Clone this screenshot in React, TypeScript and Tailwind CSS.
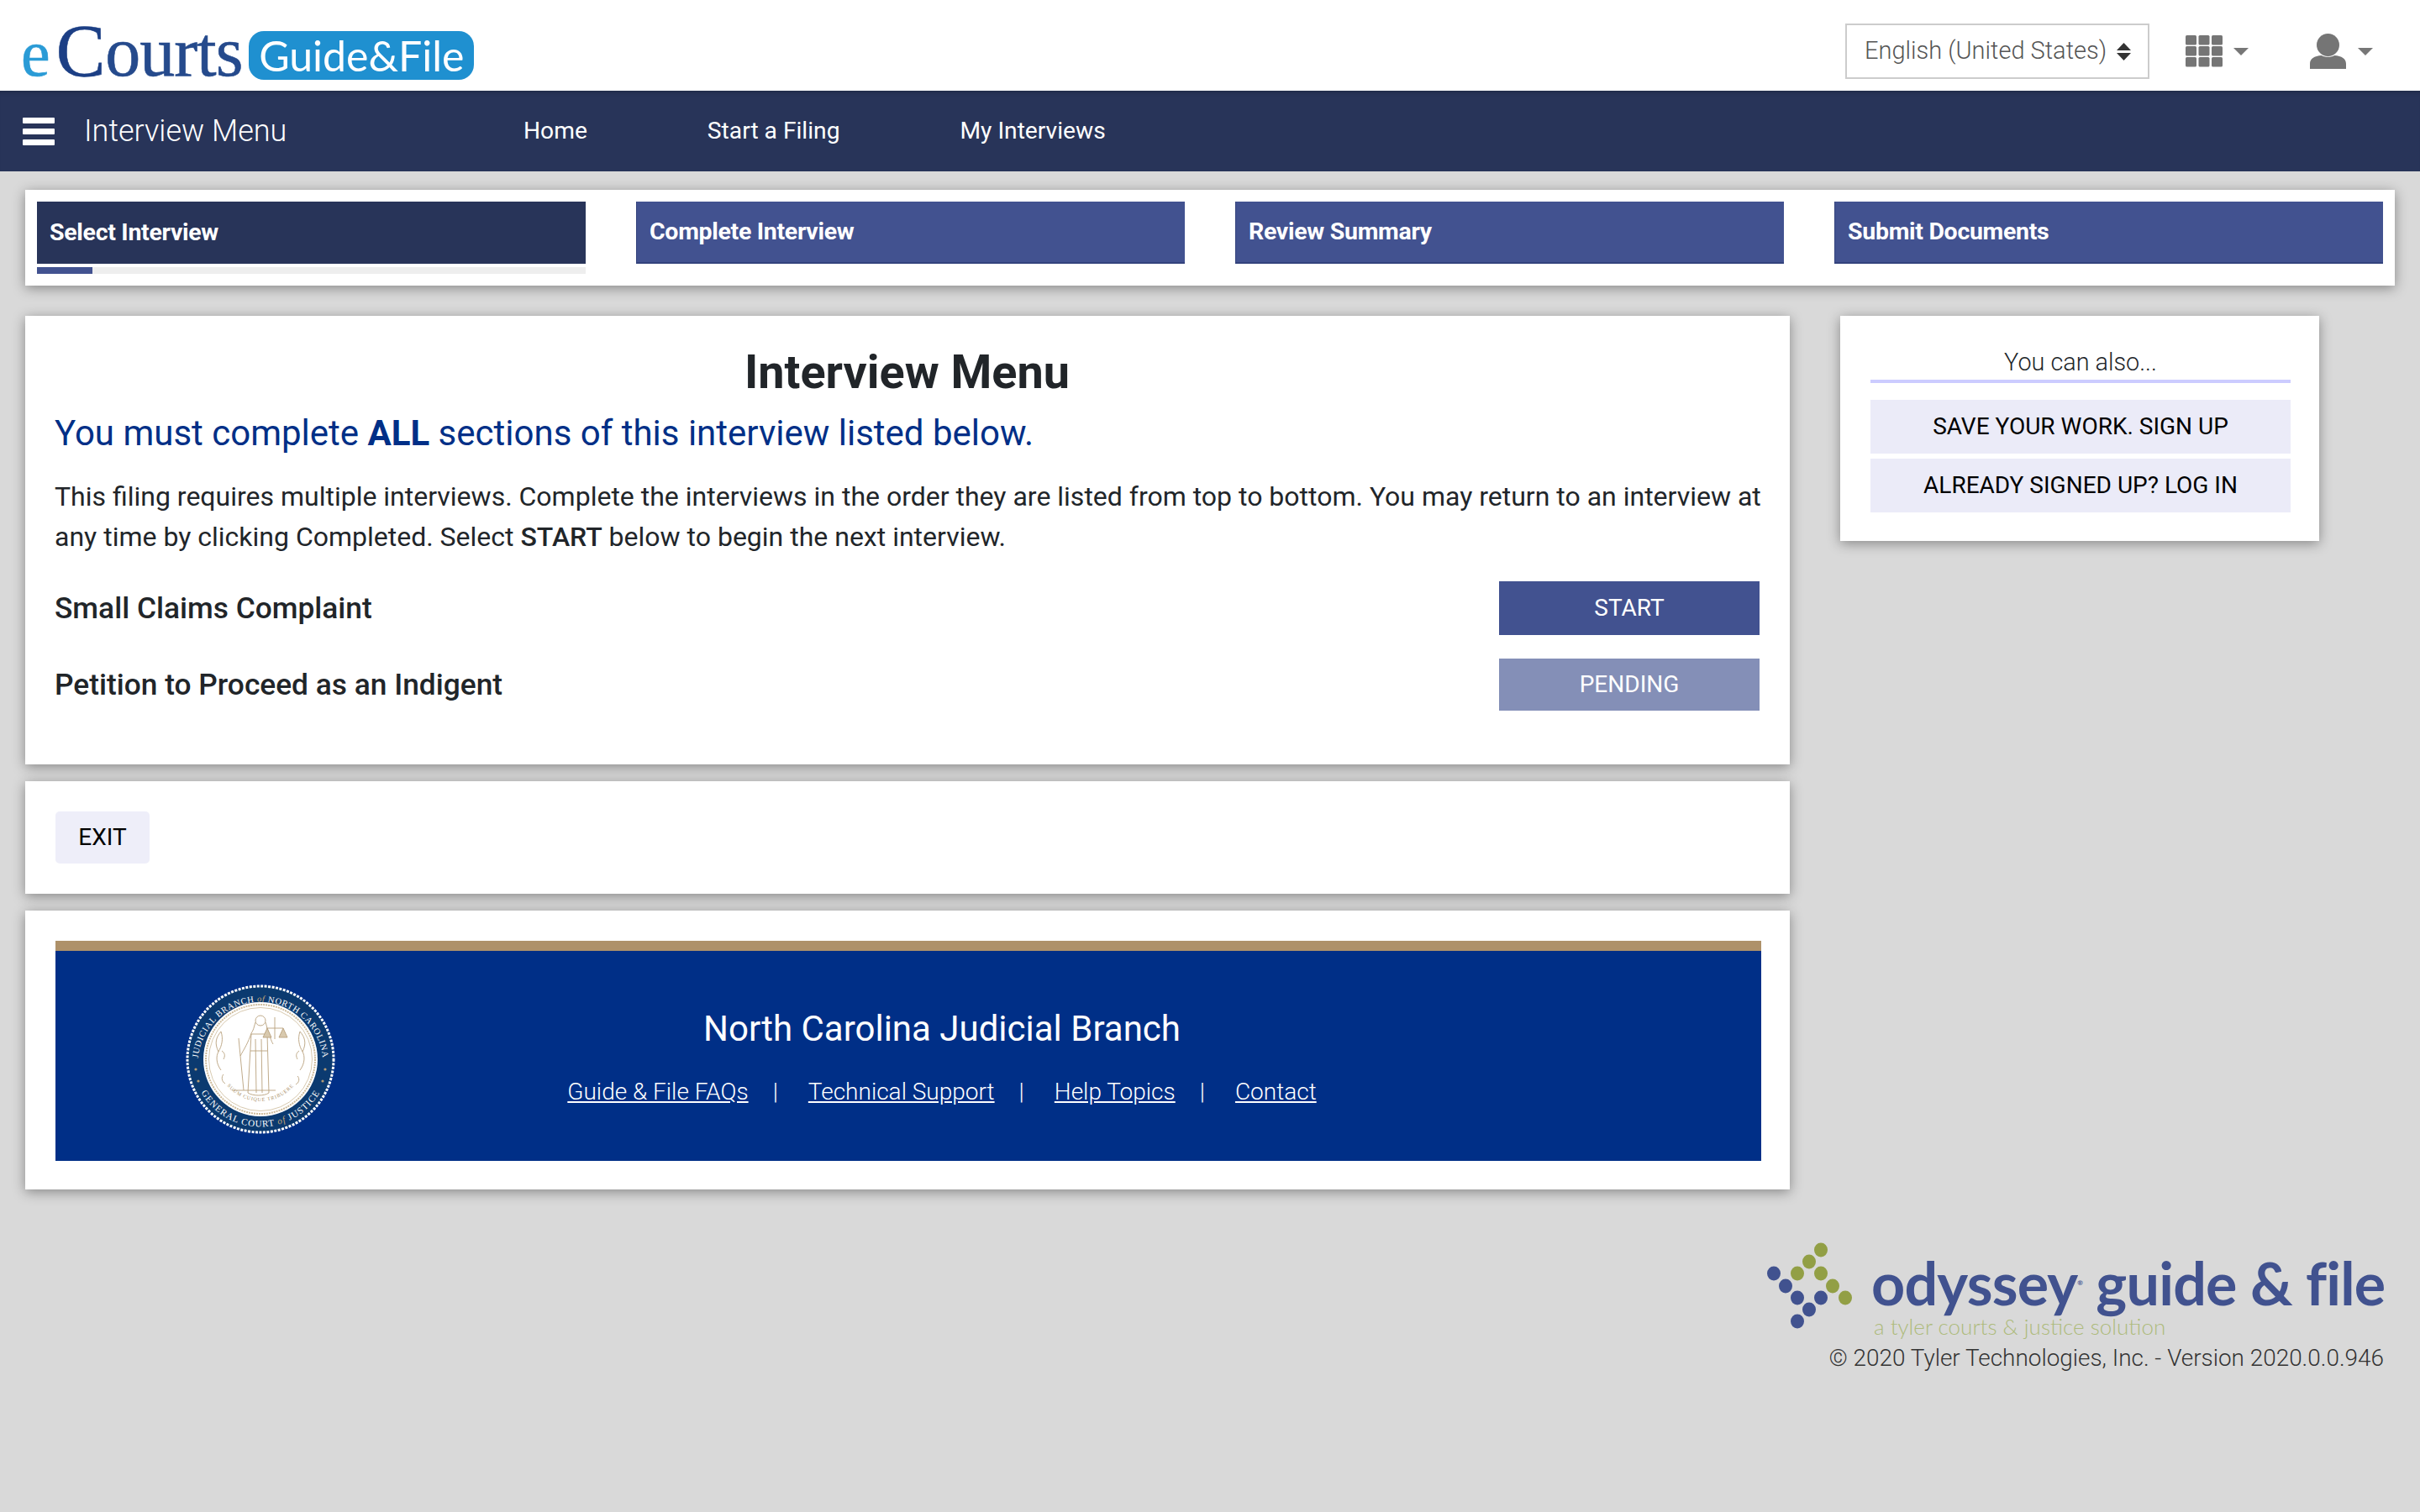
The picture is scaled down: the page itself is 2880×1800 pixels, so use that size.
const steps = ["Select Interview", "Complete Interview", "Review Summary", "Submit Documents"];
const navLinks = ["Home", "Start a Filing", "My Interviews"];

const cardShadow = "shadow-[0_3px_14px_rgba(0,0,0,0.38)]";

const Caret = () => (
  <svg width="18" height="9" viewBox="0 0 18 9">
    <path d="M0 0h18L9 9z" fill="#777" />
  </svg>
);

const GridIcon = () => (
  <svg width="44" height="38" viewBox="0 0 44 38" fill="#757575">
    {[0, 15.5, 31].map((x) =>
      [0, 13, 26].map((y) => <rect key={`${x}-${y}`} x={x} y={y} width="13" height="11.5" rx="1.5" />)
    )}
  </svg>
);

const UserIcon = () => (
  <svg width="43" height="42" viewBox="0 0 43 42" fill="#757575">
    <ellipse cx="21.5" cy="13.5" rx="13.5" ry="13.5" />
    <path d="M0 42V36C0 30 5 26.5 14 26c2 2.4 13 2.4 15 0 9 .5 14 4 14 10v6z" />
  </svg>
);

const Seal = () => (
  <svg width="180" height="180" viewBox="0 0 180 180">
    <defs>
      <path id="sealTop" d="M 15.5 96 A 74.5 74.5 0 0 1 164.5 96" />
      <path id="sealBottom" d="M 9 98 A 81.5 81.5 0 0 0 171 98" />
      <path id="sealMotto" d="M 42 108 A 52 52 0 0 0 138 108" />
    </defs>
    <circle cx="90" cy="90" r="87" fill="#0b3a70" stroke="#fff" strokeWidth="3" strokeDasharray="3 1.5" />
    <text fontFamily="'Liberation Serif', serif" fontSize="10.5" fill="#fff" letterSpacing="0.6">
      <textPath href="#sealTop" startOffset="50%" textAnchor="middle">
        JUDICIAL BRANCH <tspan fill="#c2a777" fontStyle="italic">of</tspan> NORTH CAROLINA
      </textPath>
    </text>
    <text fontFamily="'Liberation Serif', serif" fontSize="11" fill="#fff" letterSpacing="1">
      <textPath href="#sealBottom" startOffset="50%" textAnchor="middle">
        GENERAL COURT <tspan fill="#c2a777" fontStyle="italic">of</tspan> JUSTICE
      </textPath>
    </text>
    <circle cx="90" cy="90" r="68" fill="#fff" />
    <circle cx="90" cy="90" r="65" fill="none" stroke="#cdbb9b" strokeWidth="2" strokeDasharray="2 1" />
    <circle cx="90" cy="90" r="61.5" fill="none" stroke="#cdbb9b" strokeWidth="0.8" />
    <g fill="none" stroke="#b9a27e" strokeWidth="0.9">
      <circle cx="90" cy="44" r="6" />
      <path d="M84 46c-2 6-2 9-5 13M96 46c2 6 2 9 4 13" />
      <path d="M79 59c-3 10-9 20-13 27M100 59c2 6 3 10 5 13" />
      <path d="M79 60l-4 70c6 4 20 4 25 0l-2-70z" />
      <path d="M84 66l1 64M91 66l1 64M78 80h20" />
      <path d="M64 65l6 62M56 127h52" />
      <path d="M107 40v26M97 53h20" />
      <path d="M98 53l-5 11h10zM117 53l-5 11h10z" fill="#d8c9ae" />
      <path d="M43 57c-6 7-8 14-3 24 4-7 6-15 3-24zM40 81c-3 5-3 14 3 22M44 80c4 3 4 6 2 10" />
      <path d="M137 57c6 7 8 14 3 24-4-7-6-15-3-24zM140 81c3 5 3 14-3 22M136 80c-4 3-4 6-2 10" />
      <path d="M46 108c-3 3-2 9 2 11M134 110c3 3 2 8-2 10" />
    </g>
    <text fontFamily="'Liberation Serif', serif" fontSize="6" fill="#a98f68" letterSpacing="0.9">
      <textPath href="#sealMotto" startOffset="50%" textAnchor="middle">SUUM CUIQUE TRIBUERE</textPath>
    </text>
    <g fill="#b59c76">
      <circle cx="13" cy="102" r="1.6" />
      <circle cx="167" cy="102" r="1.6" />
      <circle cx="16" cy="116" r="1.6" />
      <circle cx="164" cy="116" r="1.6" />
    </g>
  </svg>
);

const DotsLogo = () => (
  <svg width="110" height="110" viewBox="0 0 110 110">
    <g fill="#929f45">
      {[[68, 12], [54, 26], [40, 40], [68, 40], [82, 55], [97, 69]].map(([x, y]) => (
        <ellipse key={`${x}-${y}`} cx={x} cy={y} rx="8" ry="8.5" />
      ))}
    </g>
    <g fill="#41528f">
      {[[12, 40], [26, 55], [40, 69], [68, 69], [54, 83], [40, 97]].map(([x, y]) => (
        <ellipse key={`${x}-${y}`} cx={x} cy={y} rx="8" ry="8.5" />
      ))}
    </g>
  </svg>
);

export default function App() {
  return (
    <div className="min-h-screen bg-[#d9d9d9] font-['Roboto',sans-serif] text-[28px] font-light text-[#212529]">
      <header className="flex h-[108px] items-center justify-between bg-white">
        <div className="ml-[25px] mt-[14px] flex items-center">
          <span className="flex items-baseline font-['Liberation_Serif',serif] leading-none [-webkit-text-stroke:0.6px]">
            <span className="text-[78px] text-[#2a9bd6]">e</span>
            <span className="ml-[7px] text-[88px] text-[#1c3f85]">C</span>
            <span className="text-[84px] tracking-[-1px] text-[#254a8c]">ourts</span>
          </span>
          <span className="ml-[8px] mt-[10px] flex h-[58px] w-[268px] items-center justify-center rounded-[18px] bg-[#1f90d0] font-['Lato',sans-serif] text-[50px] font-normal leading-none text-white">
            Guide&amp;File
          </span>
        </div>
        <div className="mr-[56px] mt-[14px] flex items-center">
          <div className="flex h-[66px] w-[362px] items-center border-2 border-[#ccc] pl-[21px] text-[#555]">
            <span className="text-[29px]">English (United States)</span>
            <svg className="ml-[12px]" width="17" height="21" viewBox="0 0 17 21" fill="#333">
              <path d="M8.5 0L17 9H0zM0 12h17l-8.5 9z" />
            </svg>
          </div>
          <div className="ml-[43px] flex items-center gap-[13px]">
            <GridIcon />
            <Caret />
          </div>
          <div className="ml-[73px] flex items-center gap-[14px]">
            <UserIcon />
            <Caret />
          </div>
        </div>
      </header>

      <nav className="flex h-[96px] items-center bg-[#283459] font-normal text-white shadow-[inset_0_6px_6px_-6px_rgba(0,0,0,0.35)]">
        <div className="ml-[27px] flex w-[38px] flex-col gap-[6px]">
          <div className="h-[7px] rounded-[1px] bg-white" />
          <div className="h-[7px] rounded-[1px] bg-white" />
          <div className="h-[7px] rounded-[1px] bg-white" />
        </div>
        <span className="ml-[35px] w-[523px] text-[36px] font-light">Interview Menu</span>
        <div className="flex gap-[143px] text-[28.2px]">
          {navLinks.map((l) => (
            <a key={l}>{l}</a>
          ))}
        </div>
      </nav>

      <div className="px-[30px] pt-[22px]">
        <div className={`grid h-[114px] w-[2820px] grid-cols-4 gap-[60px] bg-white px-[14px] pt-[14px] ${cardShadow}`}>
          {steps.map((s, i) => (
            <div key={s}>
              <div
                className={`flex h-[74px] items-center border-[#33427c] pl-[15px] text-[28.5px] font-bold tracking-[-0.3px] text-white ${
                  i === 0 ? "bg-[#283459]" : "border-b-2 border-l bg-[#425290]"
                }`}
              >
                {s}
              </div>
              {i === 0 && (
                <div className="mt-[4px] h-[8px] bg-[#eee]">
                  <div className="h-full w-[66px] bg-[#425290]" />
                </div>
              )}
            </div>
          ))}
        </div>

        <div className="mt-[36px] flex items-start">
          <div className="flex w-[2100px] flex-col gap-[20px]">
            <section className={`h-[534px] bg-white pl-[35px] pr-[36px] ${cardShadow}`}>
              <h1 className="pt-[35px] text-center text-[55.8px] font-bold leading-[64px]">Interview Menu</h1>
              <p className="mt-[15px] text-[42px] font-normal leading-[52px] text-[#002f87]">
                You must complete <b className="font-bold">ALL</b> sections of this interview listed below.
              </p>
              <p className="mr-[-8px] mt-[25px] text-[32px] font-normal leading-[48px]">
                This filing requires multiple interviews. Complete the interviews in the order they are listed from top to bottom. You may return to an interview at any time by clicking Completed. Select{" "}
                <b className="font-medium">START</b> below to begin the next interview.
              </p>
              <div className="mt-[29px] flex h-[64px] items-center justify-between">
                <span className="text-[35.3px] font-medium">Small Claims Complaint</span>
                <button className="h-[64px] w-[310px] bg-[#425290] font-normal text-white">START</button>
              </div>
              <div className="mt-[28px] flex h-[62px] items-center justify-between">
                <span className="text-[35.3px] font-medium">Petition to Proceed as an Indigent</span>
                <button className="h-[62px] w-[310px] bg-[#848fb7] font-normal text-white">PENDING</button>
              </div>
            </section>

            <section className={`h-[134px] bg-white pl-[36px] pt-[36px] ${cardShadow}`}>
              <button className="h-[62px] w-[112px] rounded-[5px] bg-[#eeeef9] font-normal text-black">EXIT</button>
            </section>

            <section className={`h-[332px] bg-white px-[36px] pt-[36px] ${cardShadow}`}>
              <div className="flex h-[262px] w-[2030px] border-t-[12px] border-[#ae9169] bg-[#002f87] text-white">
                <div className="ml-[154px] mt-[39px]">
                  <Seal />
                </div>
                <div className="flex flex-1 flex-col items-center pr-[254px] pt-[67px]">
                  <h2 className="text-[42px] font-normal leading-[52px]">North Carolina Judicial Branch</h2>
                  <div className="mt-[28px] flex items-center">
                    <a className="underline">Guide &amp; File FAQs</a>
                    <span className="ml-[29px] mr-[36px]">|</span>
                    <a className="underline">Technical Support</a>
                    <span className="ml-[29px] mr-[36px]">|</span>
                    <a className="underline">Help Topics</a>
                    <span className="ml-[29px] mr-[36px]">|</span>
                    <a className="underline">Contact</a>
                  </div>
                </div>
              </div>
            </section>
          </div>

          <aside className={`ml-[60px] h-[268px] w-[570px] bg-white pl-[36px] pr-[34px] pt-[37px] ${cardShadow}`}>
            <div className="border-b-4 border-[#ccccff] pb-[3px] text-center text-[28.8px] leading-[36px]">You can also...</div>
            <button className="mt-[20px] block h-[64px] w-full bg-[#ebebf8] font-normal text-black">SAVE YOUR WORK. SIGN UP</button>
            <button className="mt-[6px] block h-[64px] w-full bg-[#ebebf8] font-normal text-black">ALREADY SIGNED UP? LOG IN</button>
          </aside>
        </div>

        <div className="mr-[13px] mt-[60px] flex flex-col items-end">
          <div className="mr-[2px] flex">
            <DotsLogo />
            <div className="ml-[18px] w-[608px]">
              <div className="mt-[11px] whitespace-nowrap font-['Lato',sans-serif] text-[70px] font-bold leading-[80px] tracking-[-0.8px] text-[#41528f]">
                odyssey<span className="align-super text-[8px]">®</span> guide &amp; file
              </div>
              <div className="pl-[3px] font-['Lato',sans-serif] text-[26px] font-light leading-[24px] text-[#aebb7c]">
                a tyler courts &amp; justice solution
              </div>
            </div>
          </div>
          <div className="mt-[5px] text-[27.9px] text-[#333]">© 2020 Tyler Technologies, Inc. - Version 2020.0.0.946</div>
        </div>
      </div>
    </div>
  );
}
